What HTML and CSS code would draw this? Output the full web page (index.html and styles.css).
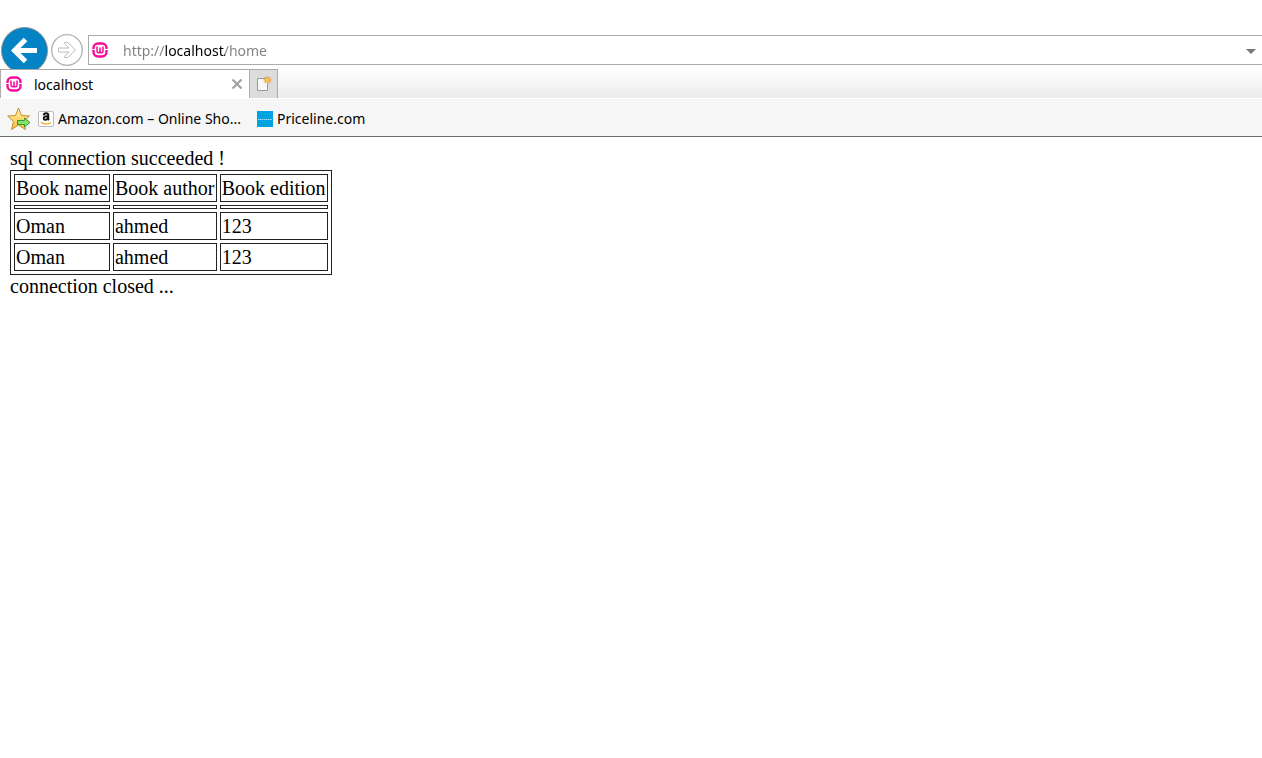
FILE: index.html
```html
<!DOCTYPE html>
<html lang="en">

<head>
    <meta charset="UTF-8">
    <meta name="viewport" content="width=device-width, initial-scale=1.0">
    <title>localhost</title>
    <link rel="stylesheet" href="styles.css">
</head>

<body>
    <svg class="defs" aria-hidden="true">
        <symbol id="wamp" viewBox="0 0 16 16">
            <rect x="1.500" y="1.500" width="13" height="13" rx="4.500" fill="none" stroke="#fb0a9b" stroke-width="2.400" />
            <path d="M0 7.500h3M13 7.500h3" stroke="#fff" stroke-width="1" />
            <path d="M5 4.500v4.500q0 1.800 1.500 1.800T8 9V5.500V9q0 1.800 1.500 1.800T11 9V4.500" fill="none" stroke="#fb0a9b" stroke-width="1.500" />
        </symbol>
    </svg>

    <header>
        <div class="nav">
            <button class="back" type="button" aria-label="Back">
                <svg width="47" height="46" viewBox="0 0 47 46">
                    <circle cx="23.500" cy="23.500" r="23" fill="#0484c4" stroke="#8b8f92" />
                    <path d="M36 23.500H14M24.500 12.500l-11 11 11 11" fill="none" stroke="#fff" stroke-width="5" />
                </svg>
            </button>
            <button class="forward" type="button" aria-label="Forward">
                <svg width="32" height="32" viewBox="0 0 32 32">
                    <circle cx="16" cy="16" r="15.3" fill="#fff" stroke="#b3b3b3" stroke-width="1.3" />
                    <path d="M7.500 14H18l-4.500-4.500V8.500H17l7.500 7.500-7.500 7.500h-3.500v-1L18 18H7.500z" fill="#fff" stroke="#bcbcbc" />
                </svg>
            </button>
            <div class="address">
                <svg width="16" height="16"><use href="#wamp" /></svg>
                <input class="url" type="text" value="http://localhost/home" aria-label="Address" spellcheck="false">
                <button class="history" type="button" aria-label="Show history">
                    <svg width="10" height="5" viewBox="0 0 10 5"><path d="M0 0h10L5 5z" fill="#777" /></svg>
                </button>
            </div>
        </div>

        <div class="tabs">
            <div class="tab">
                <svg width="16" height="16"><use href="#wamp" /></svg>
                <span class="title">localhost</span>
                <button class="close" type="button" aria-label="Close tab">
                    <svg width="12" height="12" viewBox="0 0 12 12"><path d="M1.500 1.500l9 9M10.500 1.500l-9 9" stroke="#a3a3a3" stroke-width="2.400" /></svg>
                </button>
            </div>
            <button class="new-tab" type="button" aria-label="New tab">
                <svg width="16" height="16" viewBox="0 0 16 16">
                    <path d="M1.500 2.500h10v12h-10z" fill="#f8f8f8" stroke="#999" />
                    <path d="M11.500 0v8M7.500 4h8M8.700 1.200l5.600 5.600M14.300 1.200L8.700 6.800" stroke="#f2a12a" stroke-width="1.300" />
                    <circle cx="11.500" cy="4" r="1.800" fill="#ffc94d" />
                </svg>
            </button>
        </div>

        <div class="favorites">
            <button class="add" type="button" aria-label="Add to favorites">
                <svg width="24" height="24" viewBox="0 0 24 24">
                    <defs>
                        <linearGradient id="gold" x1="0" y1="0" x2="0" y2="1">
                            <stop offset="0" stop-color="#fff3b0" />
                            <stop offset="1" stop-color="#f6bf35" />
                        </linearGradient>
                    </defs>
                    <path d="M11.500 1l3 7.500 8 .5-6 5.500 2 8-7-4.500-7 4.500 2-8L.7 9l7.800-.5z" fill="url(#gold)" stroke="#c98a2b" stroke-linejoin="round" />
                    <path d="M10.500 13.500h7V11l5.500 4.500-5.500 4.500v-2.500h-7z" fill="#8ce06a" stroke="#2f9b2f" stroke-linejoin="round" />
                </svg>
            </button>
            <a class="fav" href="#">
                <svg width="16" height="16" viewBox="0 0 16 16">
                    <rect x=".5" y=".5" width="15" height="15" rx="1.500" fill="#fff" stroke="#bbb" />
                    <path d="M5.600 4.200Q6 2.300 8 2.300q2.300 0 2.300 2v3.200q0 1 .7 1.700M10.200 5.300Q5.700 5 5.700 7.500q0 1.400 1.500 1.400 3 0 3-3.600" fill="none" stroke="#111" stroke-width="1.900" />
                    <path d="M2.800 11.200q5 3.300 10 .4" fill="none" stroke="#f5a623" stroke-width="1.300" />
                </svg>
                <span>Amazon.com – Online Sho...</span>
            </a>
            <a class="fav" href="#">
                <svg width="16" height="16" viewBox="0 0 16 16">
                    <path d="M0 0h16v16H0z" fill="#00a3e0" />
                    <path d="M1 8.500h14" stroke="#a5def5" stroke-width="1.200" stroke-dasharray="1.500 .5" />
                </svg>
                <span>Priceline.com</span>
            </a>
        </div>
    </header>

    <main>
        sql connection succeeded !
        <table>
            <tr>
                <td>Book name</td>
                <td>Book author</td>
                <td>Book edition</td>
            </tr>
            <tr>
                <td></td>
                <td></td>
                <td></td>
            </tr>
            <tr>
                <td>Oman</td>
                <td>ahmed</td>
                <td>123</td>
            </tr>
            <tr>
                <td>Oman</td>
                <td>ahmed</td>
                <td>123</td>
            </tr>
        </table>
        connection closed ...
    </main>
</body>

</html>
```
FILE: styles.css
```css
* {
    margin: 0;
    padding: 0;
    box-sizing: border-box;
}

body {
    background: #fff;
    color: #000;
    font-family: "Liberation Serif", "Times New Roman", serif;
    font-size: 20px;
}

.defs {
    position: absolute;
    width: 0;
    height: 0;
}

svg {
    display: block;
    flex: none;
}

button {
    border: none;
    background: none;
    cursor: pointer;
}

header {
    font-family: "Noto Sans", "Segoe UI", sans-serif;
    font-size: 14px;
    line-height: 20px;
}

.nav {
    display: flex;
    align-items: center;
    padding: 27px 0 0 1px;
}

.forward {
    margin: 0 5px 0 3px;
}

.address {
    flex: 1;
    display: flex;
    align-items: center;
    height: 30px;
    padding-left: 3px;
    border: 1px solid #ababab;
    border-right: none;
}

/* the host part of the url is darker than the rest */
.url {
    flex: 1;
    min-width: 0;
    margin-left: 15px;
    padding-top: 2px;
    border: none;
    outline: none;
    font: inherit;
    caret-color: #000;
    background: linear-gradient(to right, #808080 42px, #000 42px, #000 102px, #808080 102px);
    background-clip: text;
    -webkit-background-clip: text;
    -webkit-text-fill-color: transparent;
}

.history {
    padding: 10px 6px 8px;
}

/* the strip covers the bottom of the back button */
.tabs {
    position: relative;
    display: flex;
    height: 29px;
    margin-top: -4px;
    background: linear-gradient(#fff, #ebebeb);
}

.tab {
    display: flex;
    align-items: center;
    width: 250px;
    padding: 0 6px 0 5px;
    background: #fff;
    border: 1px solid #ababab;
    border-bottom: none;
}

.title {
    flex: 1;
    margin-left: 12px;
    padding-top: 2px;
}

.new-tab {
    width: 28px;
    padding-left: 6px;
    background: #dcdcdc;
    border: 1px solid #ababab;
    border-width: 1px 1px 0 0;
}

.favorites {
    display: flex;
    align-items: center;
    height: 39px;
    padding: 3px 0 0 7px;
    background: #f6f6f6;
    border-top: 1px solid #fff;
    border-bottom: 1px solid #6d6d6d;
}

.add {
    margin-right: 7px;
}

.fav {
    display: flex;
    align-items: center;
    gap: 4px;
    margin-right: 16px;
    color: #000;
    text-decoration: none;
}

main {
    padding: 10px;
}

table {
    min-width: 322px;
    border: 1px solid #222;
    border-spacing: 3px;
}

td {
    padding: 1px;
    border: 1px solid #222;
    line-height: 24px;
}
```
